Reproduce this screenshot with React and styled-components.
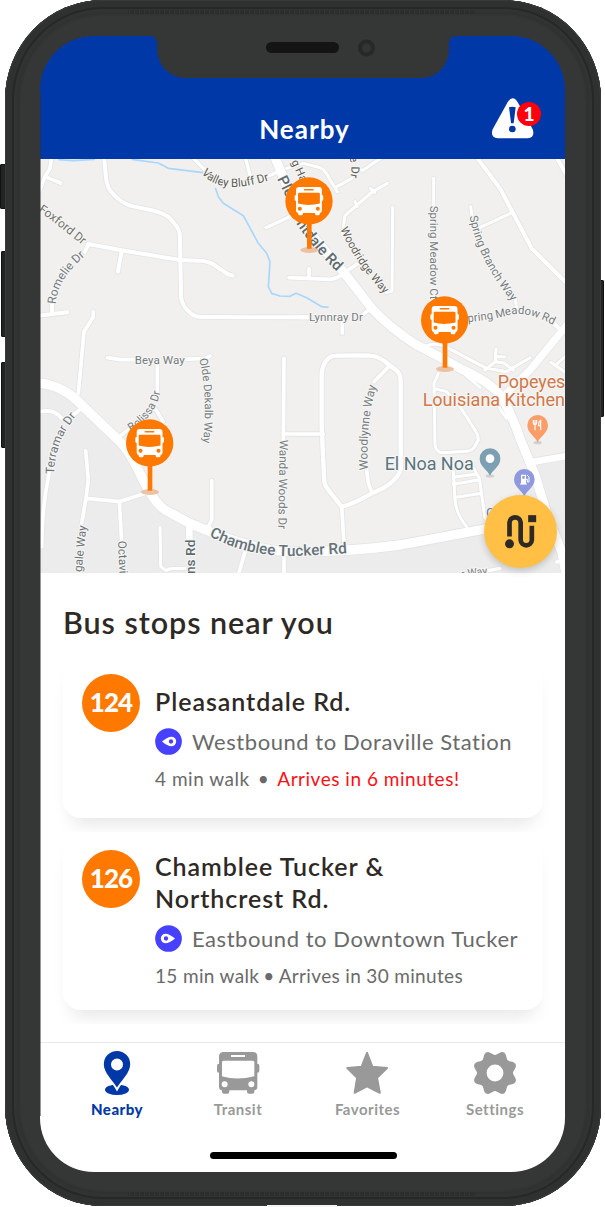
import React from "react";
import styled, { createGlobalStyle } from "styled-components";

const Global = createGlobalStyle`
  * { box-sizing: border-box; }
  body { margin: 0; background: #fff; font-family: Lato, "Open Sans", sans-serif; }
`;

const Stage = styled.main`
  position: relative;
  width: 605px;
  height: 1207px;
  overflow: hidden;
  background: #fff;
`;

const SideButton = styled.i`
  position: absolute;
  left: ${(p) => p.$x}px;
  top: ${(p) => p.$y}px;
  width: 6px;
  height: ${(p) => p.$h}px;
  border-radius: 2px;
  background: #222424;
  box-shadow: inset 0 0 0 1px #101111;
`;

const Shell = styled.div`
  position: relative;
  width: 596px;
  height: 1206px;
  margin-left: 5px;
  padding: 36px 36px 34px 35px;
  border-radius: 98px / 100px;
  background: #353636;
  box-shadow: inset 0 0 1px 1px #3a3b3b, inset 0 0 0 7px #2f3131, inset 0 0 0 9px #262828,
    inset 0 0 2px 13px #323434, inset 0 0 2px 14px #2e3030;
`;

const Grain = styled.i`
  position: absolute;
  left: 123px;
  top: ${(p) => p.$y}px;
  width: 346px;
  height: 4px;
  background: repeating-linear-gradient(90deg, #2a2b2b 0 1px, #343535 1px 2px, #2c2d2d 2px 5px);
`;

const PortStrip = styled.i`
  position: absolute;
  left: 267px;
  top: 1205px;
  width: 70px;
  height: 2px;
  background: #f4f4f4;
`;

const Screen = styled.div`
  position: relative;
  display: flex;
  flex-direction: column;
  width: 525px;
  height: 1136px;
  overflow: hidden;
  border-radius: 54px;
  background: linear-gradient(#0038a8 123px, #fff 123px);
  &::after {
    content: "";
    position: absolute;
    inset: 56px auto 56px 0;
    width: 1px;
    background: rgba(50, 50, 50, 0.5);
  }
`;

const Notch = styled.svg`
  position: absolute;
  left: 0;
  top: 0;
  width: 525px;
  height: 44px;
`;

const Header = styled.header`
  position: relative;
  flex: none;
  display: flex;
  justify-content: center;
  height: 123px;
  padding-top: 77px;
`;

const HeaderTitle = styled.h1`
  margin: 0 0 0 4px;
  color: #fff;
  font-size: 26px;
  font-weight: 700;
  line-height: 32px;
  letter-spacing: 1px;
`;

const AlertButton = styled.div`
  position: absolute;
  left: 451px;
  top: 62px;
  width: 50px;
  height: 42px;
`;

const AlertCount = styled.span`
  position: absolute;
  left: 26px;
  top: 4px;
  width: 24px;
  height: 24px;
  border-radius: 50%;
  background: #ff000c;
  color: #fff;
  font-size: 19px;
  font-weight: 900;
  line-height: 23px;
  text-align: center;
`;

const MapArea = styled.section`
  position: relative;
  flex: none;
  height: 414px;
`;

const MapDrawing = styled.svg`
  display: block;
  width: 525px;
  height: 414px;
`;

const RouteButton = styled.div`
  position: absolute;
  left: 444px;
  top: 336px;
  width: 73px;
  height: 73px;
  border-radius: 50%;
  background: #ffc045;
  box-shadow: 0 3px 7px rgba(0, 0, 0, 0.18);
`;

const Stops = styled.section`
  flex: 1;
  padding-top: 29px;
`;

const SectionTitle = styled.h2`
  margin: 0 0 14px 23px;
  color: #2e2925;
  font-size: 30.5px;
  font-weight: 600;
  line-height: 40px;
  letter-spacing: 0.95px;
`;

const CardClip = styled.div`
  overflow: hidden;
  padding: 0 22px 14px 23px;
`;

const Card = styled.article`
  display: flex;
  gap: 15px;
  height: ${(p) => p.$height}px;
  padding: 18px 0 0 19px;
  border-radius: 18px;
  background: #fff;
  box-shadow: 0 14px 18px -8px rgba(0, 0, 0, 0.1);
`;

const RouteBadge = styled.div`
  flex: none;
  width: 58px;
  height: 58px;
  border-radius: 50%;
  background: #ff7800;
  color: #fff;
  font-size: 26px;
  font-weight: 900;
  line-height: 56px;
  text-align: center;
  letter-spacing: -0.9px;
`;

const Info = styled.div`
  padding-top: ${(p) => p.$drop || 0}px;
  white-space: nowrap;
`;

const StopName = styled.h3`
  margin: 0 0 8.5px;
  color: #2e2925;
  font-size: 25px;
  font-weight: 600;
  line-height: 32px;
  letter-spacing: ${(p) => p.$track}px;
`;

const Direction = styled.div`
  display: flex;
  align-items: center;
  gap: 10px;
  height: 32px;
  margin-bottom: 9px;
  color: #6a6a6a;
  font-size: 22px;
  line-height: 32px;
  letter-spacing: 0.55px;
`;

const Meta = styled.div`
  display: flex;
  gap: ${(p) => p.$gap}px;
  color: #6a6a6a;
  font-size: 19px;
  line-height: 24px;
  letter-spacing: ${(p) => p.$track}px;
`;

const Arrival = styled.span`
  color: ${(p) => (p.$urgent ? "#ff0f14" : "inherit")};
`;

const TabBar = styled.nav`
  flex: none;
  display: grid;
  grid-template-columns: 122px 120px 139px 116px;
  height: 130px;
  padding: 8px 0 0 16px;
  border-top: 1px solid #e9e9e9;
`;

const Tab = styled.div`
  display: flex;
  flex-direction: column;
  align-items: center;
  gap: 4px;
  color: ${(p) => (p.$active ? "#0038a8" : "#999")};
  font-size: 15px;
  font-weight: ${(p) => (p.$active ? 900 : 700)};
  line-height: 20px;
  letter-spacing: 0.5px;
  svg { display: block; width: 44px; height: 44px; }
`;

const HomeBar = styled.i`
  position: absolute;
  left: 170px;
  bottom: 13px;
  width: 187px;
  height: 7px;
  border-radius: 4px;
  background: #000;
`;

const BUS =
  "M20 0H107Q121 0 121 14V35Q127 35 127 41V57Q127 62 121 62V104Q121 114 112 115V119Q112 125 106 125H96Q90 125 90 119V115H37V119Q37 125 31 125H21Q15 125 15 119V115Q6 114 6 104V62Q0 62 0 57V41Q0 35 6 35V14Q6 0 20 0Z M42 9V15H84V9Z M20 26Q15 26 15 31V73Q60 86 112 73V31Q112 26 107 26Z M14 97a9 9 0 1 0 18 0a9 9 0 1 0-18 0Z M94 97a9 9 0 1 0 18 0a9 9 0 1 0-18 0Z";

// The map is drawn in units of one third of a pixel, in four tiles.
const TILE = { nw: [0, 0], ne: [810, 0], sw: [0, 615], se: [810, 615] };
const shift = (t) => `translate(${TILE[t][0]} ${TILE[t][1]})`;

const ROADS = [
  ["nw", 11, "M66 0L60 40L45 65L28 110M45 65L92 84"],
  ["nw", 12, "M222 0L228 70Q232 98 245 112Q270 142 300 152L375 168Q408 178 420 190L438 212Q450 225 450 250L453 425Q455 445 467 460Q487 486 512 486L835 487"],
  ["nw", 12, "M175 267L275 286L450 315L520 318Q545 322 560 335L592 357L608 362M275 288L264 350M175 267L165 290M66 445V475M28 482L112 472"],
  ["nw", 11, "M190 470V485L162 530L145 715"],
  ["nw", 11, "M232 608L270 614H320M460 613L525 610L540 603M382 625V720"],
  ["nw", 10, "M485 5L530 50M645 5L660 60M700 68L740 53M708 218L785 182"],
  ["ne", 11, "M-33 368L90 373Q115 370 130 355L175 325M27 340V370M0 487H25M175 490L212 460M127 500V535"],
  ["ne", 9, "M-40 40L10 25L60 38Q75 45 85 65L112 110M105 98L155 70M160 45H190L245 8"],
  ["ne", 9, "M262 85L215 112L135 182L126 240M211 100L224 112M165 140L172 155"],
  ["ne", 9, "M278 157L276 408L258 413M401 70V150M512 155L517 190M645 425L650 462M540 217L638 172"],
  ["ne", 12, "M525 0L600 100L638 172L695 280L800 385M765 0L800 60M755 500L780 522"],
  ["ne", 9, "M375 574Q400 562 430 572L560 640L620 650L690 608M588 582L586 620L555 645M588 605H615M586 620L612 624L640 645M752 622L800 655M768 630L800 600"],
  ["se", 13, "M65 40Q72 -12 110 -13L205 -14Q235 -12 255 5L285 28Q302 40 302 60V325Q300 350 255 382L210 403Q160 432 125 440L85 390Q72 375 72 350L65 200Z"],
  ["se", 11, "M268 18L222 65M200 330L205 370L215 395M125 440L132 550M-50 222H70"],
  ["sw", 11, "M762 -5L760 240M762 560V645"],
  ["se", 9, "M415 40L402 70L405 255Q408 275 425 278L500 274Q520 270 525 258L535 240Q535 225 525 210L480 140L440 95L405 86M485 35L540 82M580 110L605 155L620 175"],
  ["se", 9, "M460 335L465 420Q470 465 500 500M460 352L530 342M460 373L535 360M468 412L545 400M522 325L538 355L555 475"],
  ["sw", 11, "M30 155Q75 145 97 178M157 142L125 170M57 340Q35 450 35 560M167 272L175 360L168 415L155 490M170 415L268 425L350 398M268 425L275 545"],
  ["sw", 9, "M390 502L392 620L408 632L420 626L465 625"],
  ["sw", 11, "M545 362V480L535 500M645 575L625 645M265 232L300 205M378 150L400 185"],
  ["sw", 20, "M478 490V540"],
  ["se", 10, "M480 648L600 625M770 606L800 600"],
  ["se", 20, "M700 305L800 288"],
  ["ne", 22, "M805 505L690 645L620 715"],
  ["ne", 27, "M-80 -5L-45 80L0 200L130 350L215 460Q270 520 350 570Q420 605 480 640Q570 680 605 725Q640 790 660 850L705 960L745 1090L785 1190L800 1265"],
  ["sw", 28, "M20 68Q100 75 155 135L265 240Q300 275 335 350Q370 425 405 450L480 490L540 515Q700 580 810 575Q960 575 1110 555L1380 504"],
];

const RIVER = [
  "M85 14L130 17L195 13",
  "M305 13L385 24L415 40L520 53M556 98L565 125L580 145L640 182L685 265L710 295L720 320L715 395L725 415L750 423L780 424L798 415L830 428L875 455L896 457",
];

const LABELS = [
  ["nw", 36, "#73716c", "M24 168Q90 213 180 290", "Foxford Dr"],
  ["nw", 36, "#777c80", "M78 448Q80 370 178 292", "Romelie Dr"],
  ["nw", 35, "#5d5b53", "M514 54Q570 125 720 75", "Valley Bluff Dr"],
  ["nw", 45, "#5d6a70", "M741 71L775 140", "Ple"],
  ["ne", 45, "#5d6a70", "M-12 205Q45 290 120 358", "ntdale Rd"],
  ["ne", 33, "#5d5b53", "M-26 20L25 130", "g Ha"],
  ["ne", 34, "#5d5b53", "M147 8Q164 45 140 95", "e Dr"],
  ["ne", 34, "#65635c", "M121 222Q165 325 260 425", "Woodridge Way"],
  ["ne", 34.5, "#777d80", "M391 152V440", "Spring Meadow Ct"],
  ["ne", 34.5, "#777d80", "M509 184Q530 310 640 445", "Spring Branch Way"],
  ["ne", 34, "#777d80", "M504 502Q600 490 625 480Q680 465 770 515", "pring Meadow Rd"],
  ["ne", 35, "#777d80", "M27 497H200", "Lynnray Dr"],
  ["nw", 35, "#777d80", "M314 626H500", "Beya Way"],
  ["sw", 34, "#777d80", "M508 -3Q535 110 517 270", "Olde Dekalb Way"],
  ["sw", 34, "#777d80", "M303 215Q390 160 394 70", "Bolissa Dr"],
  ["sw", 36, "#6f7578", "M72 343Q75 240 142 165", "Terramar Dr"],
  ["sw", 35, "#6f7578", "M155 637L172 470", "gale Way"],
  ["sw", 35, "#6f7578", "M264 543L270 680", "Octavia"],
  ["sw", 41, "#5d6a70", "M494 642V500", "ns Rd"],
  ["sw", 35, "#777d80", "M749 239L744 540", "Wanda Woods Dr"],
  ["sw", 46, "#657278", "M537 528Q655 592 800 588Q890 584 980 577", "Chamblee Tucker Rd"],
  ["se", 36, "#777d80", "M204 330Q195 190 234 60", "Woodlynne Way"],
  ["se", 32, "#777d80", "M485 653L570 641", "r Way"],
  ["se", 40, "#6878c0", "M558 470H600", "C"],
];

const PLACES = [
  ["se", 593, 83, "#d17848", "Popeyes", 203],
  ["se", 368, 137, "#d17848", "Louisiana Kitchen", 427],
  ["se", 254, 329, "#5b7580", "El Noa Noa", 267],
];

function PlacePin({ x, y, color, children }) {
  return (
    <g transform={`translate(${x} ${y})`}>
      <ellipse cx="0" cy="52" rx="13" ry="5" fill="#000" opacity=".12" />
      <path d="M0 52C-7 33-31 24-31 0a31 31 0 0 1 62 0C31 24 7 33 0 52Z" fill={color} />
      {children}
    </g>
  );
}

function StopPin({ x, y }) {
  return (
    <g transform={`translate(${x} ${y})`}>
      <ellipse cx="1" cy="147" rx="27" ry="9" fill="#eab894" opacity=".85" />
      <path d="M-6 60H8V143H-6Z" fill="#ff7800" />
      <circle r="71" fill="#ff7800" />
      <path transform="translate(-43 -42) scale(.675)" d={BUS} fill="#fff" fillRule="evenodd" />
    </g>
  );
}

function StreetMap() {
  return (
    <MapDrawing viewBox="30 12 1575 1242">
      <rect x="30" y="12" width="1575" height="1242" fill="#f1f0ef" />
      <path d="M20 680Q100 690 155 750L265 855Q300 890 335 965Q370 1040 405 1065L540 1130Q700 1195 810 1190Q960 1190 1110 1170L1380 1119L1530 920L1610 900V1260H20Z" fill="#ececec" />
      {RIVER.map((d) => (
        <path key={d} d={d} fill="none" stroke="#a9d7fb" strokeWidth="5" strokeLinejoin="round" />
      ))}
      {["edge", "road"].map((layer) => (
        <g key={layer} fill="none" strokeLinecap="round" strokeLinejoin="round" stroke={layer === "edge" ? "#e3e4e5" : "#fff"}>
          {ROADS.map(([t, w, d]) => (
            <path key={d} d={d} transform={shift(t)} strokeWidth={layer === "edge" ? w + 5 : w} />
          ))}
        </g>
      ))}
      <g fontFamily="Roboto, sans-serif" stroke="#f5f5f4" strokeWidth="7" strokeLinejoin="round" paintOrder="stroke">
        {LABELS.map(([t, size, fill, d, text], i) => (
          <g key={i} transform={shift(t)}>
            <path id={`street${i}`} d={d} fill="none" stroke="none" />
            <text fontSize={size} fill={fill} fontWeight={size > 40 ? 500 : 400}>
              <textPath href={`#street${i}`}>{text}</textPath>
            </text>
          </g>
        ))}
        {PLACES.map(([t, x, y, fill, text, w]) => (
          <text key={text} transform={shift(t)} x={x} y={y} fontSize="54" fill={fill} textLength={w} lengthAdjust="spacingAndGlyphs">
            {text}
          </text>
        ))}
      </g>
      <PlacePin x={1523} y={811} color="#fb9d69">
        <path d="M-13-16V-7Q-13-2-8-2V15M-8-16V-2M-3-16V-7Q-3-2-8-2M9 15V-15Q3-12 3-3V1H9" fill="none" stroke="#fff" strokeWidth="3.5" />
      </PlacePin>
      <PlacePin x={1380} y={911} color="#7c9fb1">
        <circle r="13" fill="#fff" />
      </PlacePin>
      <PlacePin x={1483} y={973} color="#8f9ade">
        <path d="M-10-14H5V15H-10ZM-6-10V-2H1V-10Z" fill="#fff" fillRule="evenodd" />
        <path d="M-13 14H8M5 0H9V8H14V-7L8-13" fill="none" stroke="#fff" strokeWidth="3" />
      </PlacePin>
      <StopPin x={837} y={138} />
      <StopPin x={1244} y={495} />
      <StopPin x={359} y={864} />
    </MapDrawing>
  );
}

const gearPoints = Array.from({ length: 120 }, (_, i) => {
  const a = (i / 120) * Math.PI * 2;
  const r = 20.2 - 2.2 * Math.cos(8 * a);
  return `${(22 + r * Math.cos(a)).toFixed(2)} ${(22 + r * Math.sin(a)).toFixed(2)}`;
}).join("L");

const TABS = [
  {
    label: "Nearby",
    active: true,
    icon: (
      <svg viewBox="0 0 44 44" fill="currentColor">
        <ellipse cx="22" cy="38.8" rx="12" ry="5.2" />
        <path d="M22 36.5C18 29.5 8.8 22 8.8 13.2a13.2 13.2 0 0 1 26.4 0C35.2 22 26 29.5 22 36.5Z" fill="#fff" stroke="#fff" strokeWidth="4" />
        <path fillRule="evenodd" d="M22 36.5C18 29.5 8.8 22 8.8 13.2a13.2 13.2 0 0 1 26.4 0C35.2 22 26 29.5 22 36.5ZM22 7.4a6 6 0 1 0 0 12a6 6 0 1 0 0-12Z" />
      </svg>
    ),
  },
  {
    label: "Transit",
    icon: (
      <svg viewBox="-3 -3 132 132">
        <path d={BUS} fill="currentColor" fillRule="evenodd" />
      </svg>
    ),
  },
  {
    label: "Favorites",
    icon: (
      <svg viewBox="0 0 44 44" fill="currentColor" stroke="currentColor" strokeWidth="2" strokeLinejoin="round">
        <path d="M21 1.8L26.3 15.7L41 17L31 26.8L33.8 41.8L21 35.4L8.6 41.8L11.1 26.8L1.3 17L15.7 15.7Z" />
      </svg>
    ),
  },
  {
    label: "Settings",
    icon: (
      <svg viewBox="0 0 44 44">
        <path d={`M${gearPoints}ZM22 13.6a8.4 8.4 0 1 0 0 16.8a8.4 8.4 0 1 0 0-16.8Z`} fill="currentColor" fillRule="evenodd" />
      </svg>
    ),
  },
];

function Compass({ east }) {
  return (
    <svg width="27" height="27" viewBox="0 0 81 81">
      <circle cx="40.5" cy="40.5" r="40" fill="#4840ff" />
      <g transform={east ? "rotate(180 40.5 40.5)" : undefined}>
        <path fillRule="evenodd" fill="#fff" d="M21 40.5Q38 26 49 26a14.5 14.5 0 0 1 0 29Q38 55 21 40.5ZM48 34a6.5 6.5 0 1 0 0 13a6.5 6.5 0 1 0 0-13Z" />
      </g>
    </svg>
  );
}

export default function App() {
  return (
    <Stage>
      <Global />
      <SideButton $x={0} $y={164} $h={45} />
      <SideButton $x={1} $y={251} $h={86} />
      <SideButton $x={1} $y={362} $h={86} />
      <SideButton $x={598} $y={280} $h={137} />
      <Shell>
        <Grain $y={10} />
        <Grain $y={1192} />
        <Screen>
          <Header>
            <HeaderTitle>Nearby</HeaderTitle>
            <AlertButton>
              <svg width="44" height="42" viewBox="0 0 132 126">
                <path d="M49 14Q65-12 81 14L125 94Q133 118 110 121H20Q-3 118 5 94Z" fill="#fff" />
                <path d="M54 28Q64 25 74 28L68 76H60Z" fill="#0038a8" />
                <circle cx="64" cy="93" r="10" fill="#0038a8" />
              </svg>
              <AlertCount>1</AlertCount>
            </AlertButton>
            <Notch viewBox="0 0 525 44">
              <path d="M109 0C115 0 117 3 117 8V13C117 28 129 42 145 42H382C398 42 409 28 409 13V8C409 3 411 0 417 0Z" fill="#353636" />
              <rect x="226" y="6" width="73" height="11" rx="5.5" fill="#141414" />
              <circle cx="326.5" cy="12" r="8.5" fill="#272828" />
              <circle cx="326.5" cy="12" r="4.5" fill="#333434" />
            </Notch>
          </Header>
          <MapArea>
            <StreetMap />
            <RouteButton>
              <svg width="73" height="73" viewBox="551.5 404.5 219 219">
                <path d="M628 529V487A16.8 16.8 0 0 1 661.5 487V540A16.8 16.8 0 0 0 695 540V497" fill="none" stroke="#2e2925" strokeWidth="14" />
                <rect x="684" y="465" width="24" height="21" fill="#2e2925" />
                <circle cx="628" cy="551" r="13.5" fill="#2e2925" />
              </svg>
            </RouteButton>
          </MapArea>
          <Stops>
            <SectionTitle>Bus stops near you</SectionTitle>
            <CardClip>
              <Card $height={162}>
                <RouteBadge>124</RouteBadge>
                <Info $drop={11}>
                  <StopName $track={0.95}>Pleasantdale Rd.</StopName>
                  <Direction>
                    <Compass />
                    Westbound to Doraville Station
                  </Direction>
                  <Meta $gap={8} $track={0.52}>
                    <span>4 min walk</span>
                    <span>•</span>
                    <Arrival $urgent>Arrives in 6 minutes!</Arrival>
                  </Meta>
                </Info>
              </Card>
            </CardClip>
            <CardClip>
              <Card $height={178}>
                <RouteBadge>126</RouteBadge>
                <Info>
                  <StopName $track={0.95}>
                    Chamblee Tucker &<br />
                    Northcrest Rd.
                  </StopName>
                  <Direction>
                    <Compass east />
                    Eastbound to Downtown Tucker
                  </Direction>
                  <Meta $gap={4} $track={0.34}>
                    <span>15 min walk</span>
                    <span>•</span>
                    <Arrival>Arrives in 30 minutes</Arrival>
                  </Meta>
                </Info>
              </Card>
            </CardClip>
          </Stops>
          <TabBar>
            {TABS.map((t) => (
              <Tab key={t.label} $active={t.active}>
                {t.icon}
                {t.label}
              </Tab>
            ))}
          </TabBar>
          <HomeBar />
        </Screen>
      </Shell>
      <PortStrip />
    </Stage>
  );
}
